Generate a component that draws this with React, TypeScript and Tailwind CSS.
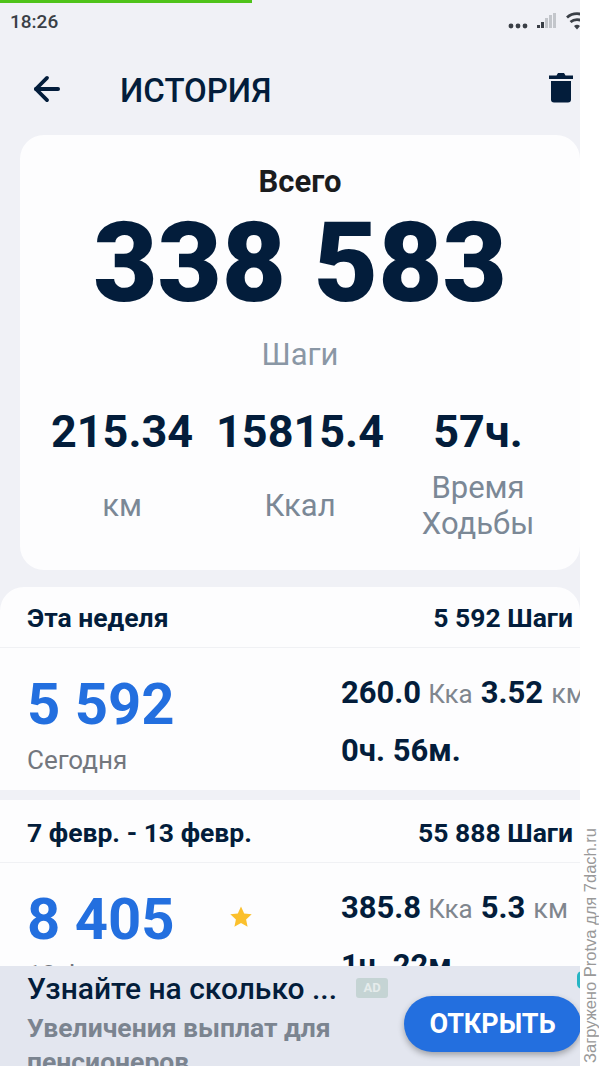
import { ArrowLeft } from "lucide-react";

function StatusBar() {
  return (
    <div className="flex h-[42px] items-center justify-between pl-[10px] pt-[2px]">
      <span className="text-[19px] font-medium text-[#3a3f46]">18:26</span>
      <svg width="72" height="24" viewBox="0 0 72 24" className="shrink-0">
        <circle cx="3" cy="16" r="2.4" fill="#3a3f46" />
        <circle cx="10" cy="16" r="2.4" fill="#3a3f46" />
        <circle cx="17" cy="16" r="2.4" fill="#3a3f46" />
        <rect x="29" y="15" width="3" height="3" fill="#3a3f46" />
        <rect x="33" y="12" width="3" height="6" fill="#3a3f46" />
        <rect x="37" y="8" width="3" height="10" fill="#c3c6cb" />
        <rect x="41" y="5" width="3" height="13" fill="#c3c6cb" />
        <rect x="45" y="3" width="3" height="15" fill="#c3c6cb" />
        <path d="M59 7.500a15 15 0 0 1 20 0" fill="none" stroke="#3a3f46" strokeWidth="2.8" />
        <path d="M62.500 12a10 10 0 0 1 13 0" fill="none" stroke="#3a3f46" strokeWidth="2.8" />
        <path d="M66 16a5 5 0 0 1 6 0l-3 3.500z" fill="#3a3f46" />
      </svg>
    </div>
  );
}

function Summary() {
  return (
    <section className="ml-5 h-[435px] rounded-[24px] bg-[#fdfdfe] pt-[27px] text-center">
      <div className="text-[31px] leading-[40px] font-bold text-[#1b1c1e]">Всего</div>
      <div className="mt-[1px] text-[111px] leading-[120px] font-black whitespace-nowrap text-[#031d3b]">338 583</div>
      <div className="mt-[12px] text-[31px] leading-[40px] text-[#8a97a5]">Шаги</div>
      <div className="mt-[31px] grid grid-cols-[204px_152px_204px]">
        <div>
          <div className="text-[45px] leading-[52px] font-bold text-[#031d3b]">215.34</div>
          <div className="mt-[28px] text-[31px] leading-[40px] text-[#7b8896]">км</div>
        </div>
        <div className="flex flex-col items-center">
          <div className="text-[45px] leading-[52px] font-bold whitespace-nowrap text-[#031d3b]">15815.4</div>
          <div className="mt-[28px] text-[31px] leading-[40px] text-[#7b8896]">Ккал</div>
        </div>
        <div>
          <div className="text-[45px] leading-[52px] font-bold text-[#031d3b]">57ч.</div>
          <div className="mt-[12px] text-[31px] leading-[36px] text-[#7b8896]">
            Время
            <br />
            Ходьбы
          </div>
        </div>
      </div>
    </section>
  );
}

function WeekHeader({ left, right, first }: { left: string; right: string; first?: boolean }) {
  return (
    <div
      className={`flex items-center justify-between border-b border-[#f0f1f4] pr-[7px] pl-[27px] text-[26.5px] font-bold whitespace-nowrap text-[#031d3b] ${
        first ? "h-[61px] pt-[2px]" : "h-[63px] pt-[4px]"
      }`}
    >
      <span>{left}</span>
      <span>{right}</span>
    </div>
  );
}

function DayRow({
  steps,
  label,
  kcal,
  km,
  time,
  star,
}: {
  steps: string;
  label: string;
  kcal: string;
  km: string;
  time: string;
  star?: boolean;
}) {
  return (
    <div className="flex h-[142px] overflow-hidden pl-[27px]">
      <div className="relative w-[314px] shrink-0 pt-[23px]">
        <div className="text-[58px] leading-[66px] font-bold text-[#236fdf]">{steps}</div>
        <div className="mt-[6px] text-[26px] leading-[34px] text-[#73777e]">{label}</div>
        {star && (
          <svg width="24" height="24" viewBox="0 0 24 24" className="absolute top-[42px] left-[202px]">
            <path d="M12 1.500l3.200 6.900 7.500.9-5.600 5.100 1.500 7.400L12 18.100l-6.600 3.700 1.500-7.400L1.300 9.300l7.500-.9z" fill="#fbc02d" />
          </svg>
        )}
      </div>
      <div className="pt-[22px] whitespace-nowrap text-[#031d3b]">
        <div className="flex h-[42px] items-baseline text-[31px] font-bold">
          <span>{kcal}</span>
          <span className="ml-[7px] text-[26px] font-normal text-[#80868e]">Кка</span>
          <span className="ml-[8px]">{km}</span>
          <span className="ml-[8px] text-[27px] font-normal text-[#80868e]">км</span>
        </div>
        <div className="mt-[18px] text-[31px] leading-[42px] font-bold">{time}</div>
      </div>
    </div>
  );
}

function AdBanner() {
  return (
    <div className="absolute right-0 bottom-0 left-0 flex h-[100px] overflow-hidden bg-[#e3e6ef] pl-[27px]">
      <div className="w-[377px] shrink-0">
        <div className="flex items-start whitespace-nowrap">
          <span className="w-[329px] text-[30px] leading-[46px] font-medium text-[#031d3b]">Узнайте на сколько ...</span>
          <span className="mt-[12px] flex h-[20px] w-[32px] items-center justify-center rounded-[3px] bg-[#c5d4d4] text-[13px] font-bold text-[#e6ecec]">
            AD
          </span>
        </div>
        <div className="mt-[-1px] text-[26.5px] leading-[34px] font-bold text-[#7b8490]">
          Увеличения выплат для
          <br />
          пенсионеров.
        </div>
      </div>
      <div className="mt-[30px] flex h-[56px] w-[177px] shrink-0 items-center justify-center rounded-full bg-[#236fdf] text-[27px] font-bold text-white shadow-[0_3px_6px_rgba(0,0,0,0.3)]">
        ОТКРЫТЬ
      </div>
      <div className="absolute top-[5px] right-[-7px] h-[18px] w-[10px] rounded-full bg-[#27b5c4]" />
    </div>
  );
}

export default function App() {
  return (
    <div className="flex h-[1066px] w-[600px] overflow-hidden bg-white font-['Roboto',sans-serif]">
      <div className="relative h-full w-[580px] shrink-0 overflow-hidden bg-[#f0f1f6]">
        <div className="absolute top-0 left-0 h-[3px] w-[252px] bg-[#4fc31a]" />
        <StatusBar />

        <header className="flex h-[93px] items-center justify-between pr-[7px] pl-[28px]">
          <div className="flex items-center">
            <ArrowLeft size={38} strokeWidth={2.4} className="text-[#031d3b]" />
            <h1 className="mt-[4px] ml-[54px] text-[33px] font-medium text-[#031d3b]">ИСТОРИЯ</h1>
          </div>
          <svg width="24" height="32" viewBox="0 0 24 32" className="mb-[4px]">
            <path d="M0 4.500h7.500L9 2h6l1.500 2.500H24V8H0z" fill="#031d3b" />
            <path d="M2 10h20v18.500a3 3 0 0 1-3 3H5a3 3 0 0 1-3-3z" fill="#031d3b" />
          </svg>
        </header>

        <Summary />

        <section className="mt-[17px] h-[203px] rounded-t-[24px] bg-[#fdfdfe]">
          <WeekHeader left="Эта неделя" right="5 592 Шаги" first />
          <DayRow steps="5 592" label="Сегодня" kcal="260.0" km="3.52" time="0ч. 56м." />
        </section>

        <section className="mt-[10px] bg-[#fdfdfe]">
          <WeekHeader left="7 февр. - 13 февр." right="55 888 Шаги" />
          <DayRow steps="8 405" label="13 февр." kcal="385.8" km="5.3" time="1ч. 22м." star />
        </section>

        <AdBanner />
      </div>

      <div className="flex w-[20px] items-end justify-center pb-[3px]">
        <span className="rotate-180 font-['Liberation_Sans',sans-serif] text-[16.5px] leading-[20px] whitespace-nowrap text-[#999] [writing-mode:vertical-rl]">
          Загружено Protva для 7dach.ru
        </span>
      </div>
    </div>
  );
}
